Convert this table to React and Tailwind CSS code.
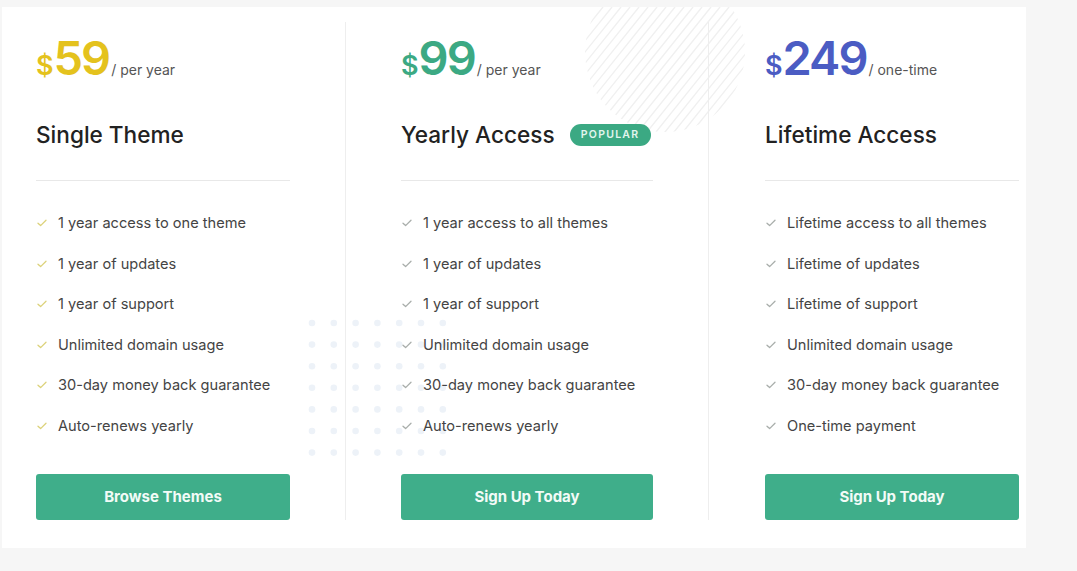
const plans = [
  {
    price: '59',
    period: '/ per year',
    priceColor: 'text-[#e4c21d]',
    checkColor: '#dcd27a',
    title: 'Single Theme',
    features: [
      '1 year access to one theme',
      '1 year of updates',
      '1 year of support',
      'Unlimited domain usage',
      '30-day money back guarantee',
      'Auto-renews yearly',
    ],
    cta: 'Browse Themes',
    col: 'w-[344px] pl-[34px] border-r',
    inner: 'w-[254px]',
  },
  {
    price: '99',
    period: '/ per year',
    priceColor: 'text-[#3ca983]',
    checkColor: '#a9aeab',
    title: 'Yearly Access',
    popular: true,
    features: [
      '1 year access to all themes',
      '1 year of updates',
      '1 year of support',
      'Unlimited domain usage',
      '30-day money back guarantee',
      'Auto-renews yearly',
    ],
    cta: 'Sign Up Today',
    col: 'w-[363px] pl-[55px] border-r',
    inner: 'w-[252px]',
  },
  {
    price: '249',
    period: '/ one-time',
    priceColor: 'text-[#4b5cc3]',
    checkColor: '#a9aeab',
    title: 'Lifetime Access',
    features: [
      'Lifetime access to all themes',
      'Lifetime of updates',
      'Lifetime of support',
      'Unlimited domain usage',
      '30-day money back guarantee',
      'One-time payment',
    ],
    cta: 'Sign Up Today',
    col: 'w-[317px] pl-[56px]',
    inner: 'w-[254px]',
  },
];

function Check({ color }) {
  return (
    <svg width="10" height="8" viewBox="0 0 10 8" fill="none" className="shrink-0">
      <path d="M1 4.2l2.6 2.4L9 1.2" stroke={color} strokeWidth="1.3" strokeLinecap="round" strokeLinejoin="round" />
    </svg>
  );
}

function Stripes() {
  const lines = [];
  for (let i = -160; i < 220; i += 9) {
    lines.push(<line key={i} x1={i} y1="150" x2={i + 120} y2="0" stroke="#f0f0f0" strokeWidth="1.4" />);
  }
  return (
    <svg width="170" height="130" viewBox="0 0 170 130" className="absolute left-[578px] top-0 pointer-events-none">
      <defs>
        <clipPath id="blob">
          <ellipse cx="85" cy="45" rx="80" ry="80" />
        </clipPath>
      </defs>
      <g clipPath="url(#blob)">{lines}</g>
    </svg>
  );
}

function Dots() {
  const dots = [];
  for (let r = 0; r < 7; r++) {
    for (let c = 0; c < 7; c++) {
      dots.push(<circle key={r + '-' + c} cx={4 + c * 21.8} cy={4 + r * 21.6} r="3.3" fill="#edf2f8" />);
    }
  }
  return (
    <svg width="145" height="145" viewBox="0 0 145 145" className="absolute left-[306px] top-[312px] pointer-events-none">
      {dots}
    </svg>
  );
}

function Plan({ plan }) {
  return (
    <div className={`${plan.col} relative my-[15px] border-[#eeeeee] flex flex-col`}>
      <div className={`${plan.inner} flex flex-col pt-[12px]`}>
        <div className={`flex items-baseline h-[48px] leading-none ${plan.priceColor}`}>
          <span className="text-[27px] font-semibold">$</span>
          <span className="text-[47px] font-semibold tracking-[-2px]">{plan.price}</span>
          <span className="text-[14px] text-[#555] ml-[2px]">{plan.period}</span>
        </div>
        <div className="mt-[39px] flex items-center h-[28px]">
          <h2 className="text-[22.6px] leading-[28px] font-medium text-[#222]">{plan.title}</h2>
          {plan.popular && (
            <span className="ml-[15px] h-[22px] w-[81px] flex items-center justify-center rounded-full bg-[#3ba983] text-[10.5px] font-semibold tracking-[0.12em] text-[#e2f5ee]">
              POPULAR
            </span>
          )}
        </div>
        <div className="mt-[31px] h-px bg-[#e8e8e8]" />
        <ul className="mt-[32px] flex flex-col gap-[20.6px]">
          {plan.features.map((f) => (
            <li key={f} className="flex items-center gap-[11px] pl-[1px] text-[14.6px] leading-[20px] text-[#444]">
              <Check color={plan.checkColor} />
              <span>{f}</span>
            </li>
          ))}
        </ul>
        <button className="mt-[38px] h-[46px] w-full rounded-[3px] bg-[#3fae8a] text-[15px] font-bold text-[#f2fbf7]">
          {plan.cta}
        </button>
      </div>
    </div>
  );
}

export default function App() {
  return (
    <div className="min-h-screen w-[1077px] h-[571px] bg-[#f6f6f6] pt-[7px] pl-[2px] font-['Inter','Liberation_Sans',sans-serif]">
      <div className="relative w-[1024px] h-[541px] bg-white overflow-hidden">
        <Stripes />
        <Dots />
        <div className="relative flex">
          {plans.map((p) => (
            <Plan key={p.title} plan={p} />
          ))}
        </div>
      </div>
    </div>
  );
}
